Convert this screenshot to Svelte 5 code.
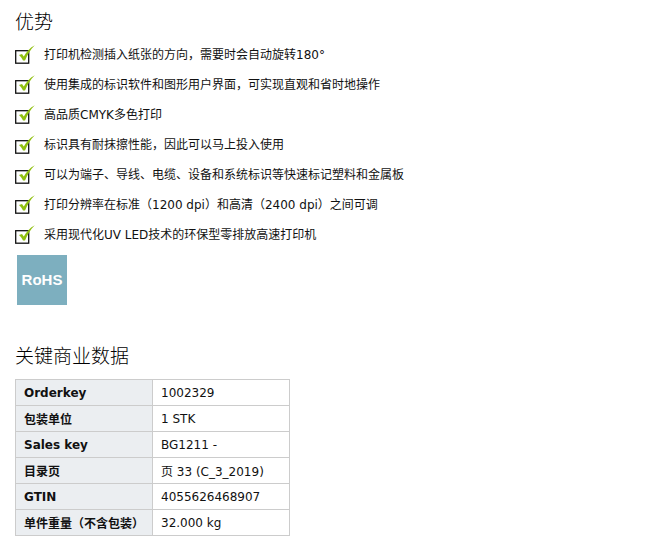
<script>
  const items = [
    '打印机检测插入纸张的方向\uFF0C需要时会自动旋转180°',
    '使用集成的标识软件和图形用户界面\uFF0C可实现直观和省时地操作',
    '高品质CMYK多色打印',
    '标识具有耐抹擦性能\uFF0C因此可以马上投入使用',
    '可以为端子、导线、电缆、设备和系统标识等快速标记塑料和金属板',
    '打印分辨率在标准\uFF081200 dpi\uFF09和高清\uFF082400 dpi\uFF09之间可调',
    '采用现代化UV LED技术的环保型零排放高速打印机'
  ];
  const rows = [
    ['Orderkey', '1002329'],
    ['包装单位', '1 STK'],
    ['Sales key', 'BG1211 -'],
    ['目录页', '页 33 (C_3_2019)'],
    ['GTIN', '4055626468907'],
    ['单件重量\uFF08不含包装\uFF09', '32.000 kg']
  ];
</script>

<main class="page">
  <h2 class="first">优势</h2>
  <ul>
    {#each items as item}
      <li>
        <svg class="check" width="20" height="20" viewBox="0 0 20 20" aria-hidden="true">
          <rect x="0.7" y="5.7" width="13" height="12.5" fill="#fff" stroke="#111" stroke-width="1.3" />
          <path d="M4 10 L7 9 L8.8 11.6 C11 7.5 14.5 3 19.8 0.3 C15.5 4.5 12.5 9.5 10 15.5 L8 15.5 C7 13.3 5.6 11.5 4 10 Z" fill="#8fbf0f" />
        </svg>
        <span>{item}</span>
      </li>
    {/each}
  </ul>
  <div class="rohs">RoHS</div>
  <h2 class="second">关键商业数据</h2>
  <table>
    <tbody>
      {#each rows as [k, v]}
        <tr>
          <th>{k}</th>
          <td>{v}</td>
        </tr>
      {/each}
    </tbody>
  </table>
</main>

<style>
  :global(body) {
    margin: 0;
    background: #fff;
  }
  .page {
    padding: 9px 0 0 15px;
    font-family: "DejaVu Sans", "Noto Sans CJK SC", sans-serif;
    font-size: 12px;
    color: #111;
  }
  h2 {
    margin: 0;
    font-family: "Noto Sans CJK SC", sans-serif;
    font-weight: 300;
    font-size: 19px;
    line-height: 24px;
    color: #000;
  }
  ul {
    list-style: none;
    margin: 12px 0 0;
    padding: 0;
  }
  li {
    display: flex;
    align-items: flex-start;
    height: 30px;
    line-height: 20px;
  }
  .check {
    flex: none;
    margin-right: 9px;
  }
  .rohs {
    width: 50px;
    height: 50px;
    margin: 0 0 0 2px;
    background: #7dafbf;
    color: #fff;
    font-family: "Liberation Sans", sans-serif;
    font-weight: 700;
    font-size: 15px;
    line-height: 50px;
    text-align: center;
  }
  .second {
    margin-top: 38px;
  }
  table {
    margin-top: 12px;
    border-collapse: collapse;
    width: 275px;
    table-layout: fixed;
  }
  th, td {
    height: 25px;
    padding: 0 8px;
    border: 1px solid #ccc;
    text-align: left;
    white-space: nowrap;
  }
  th {
    width: 120px;
    background: #ebeef1;
    font-weight: 700;
  }
</style>
